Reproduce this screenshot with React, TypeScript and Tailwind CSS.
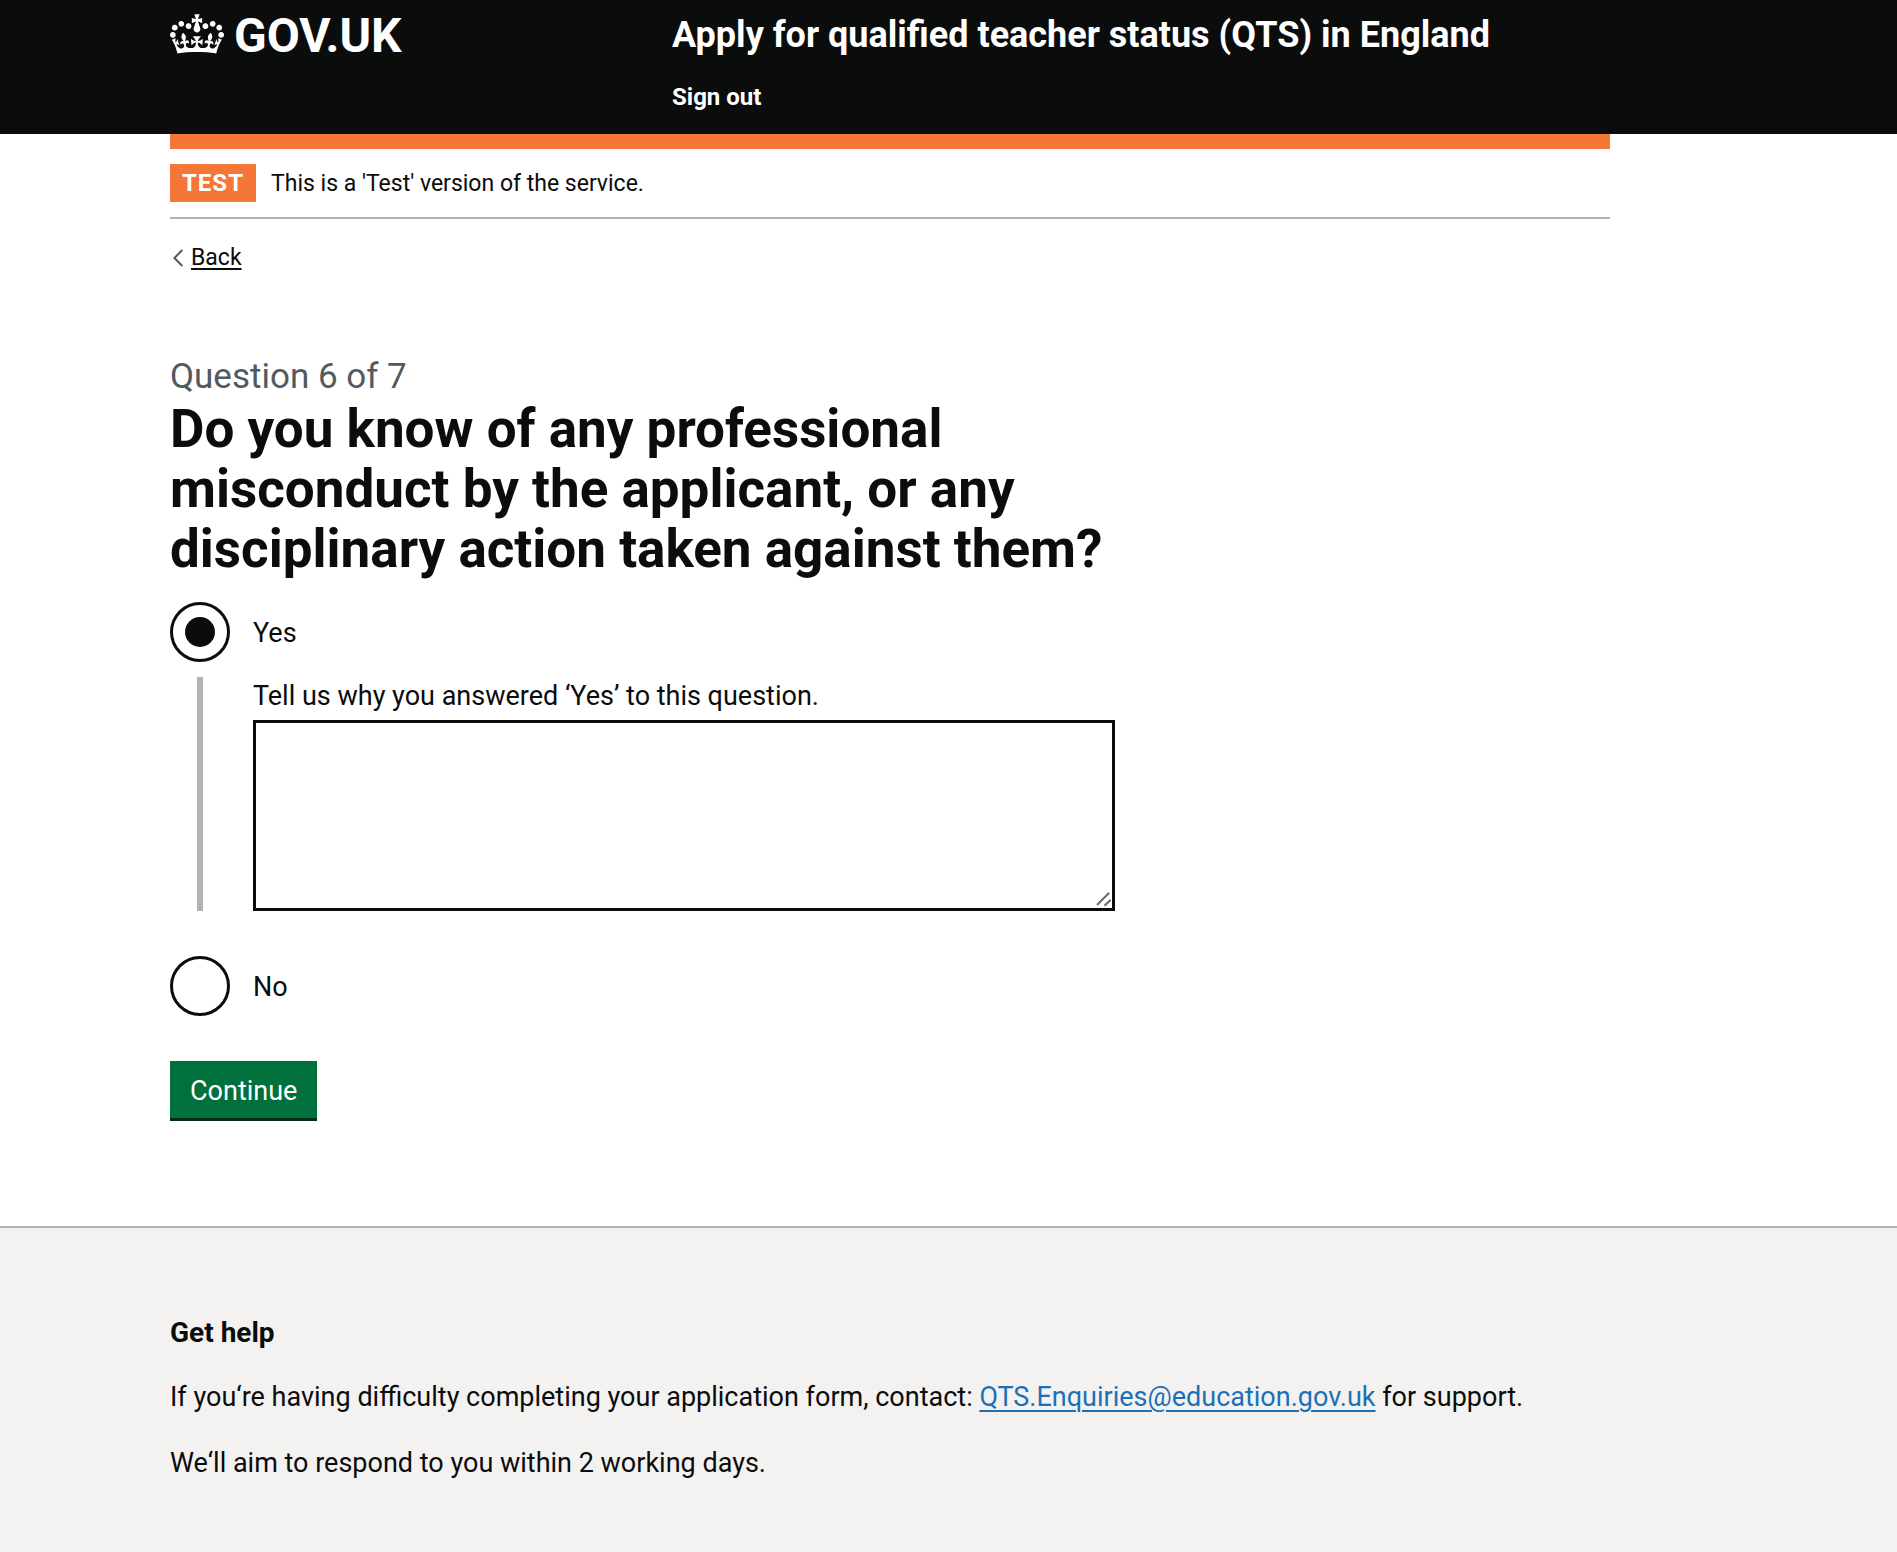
import React, { useState } from 'react';

const CROWN =
  'M25 30.2c3.5 1.5 7.7-.2 9.1-3.7 1.5-3.6-.2-7.8-3.9-9.2-3.6-1.4-7.6.3-9.1 3.9-1.4 3.5.3 7.5 3.9 9zM9 39.5c3.6 1.5 7.8-.2 9.2-3.7 1.5-3.6-.2-7.8-3.9-9.1-3.6-1.5-7.6.2-9.1 3.8-1.4 3.5.3 7.5 3.8 9zM4.4 57.2c3.5 1.5 7.7-.2 9.1-3.8 1.5-3.6-.2-7.7-3.9-9.1-3.5-1.5-7.6.3-9.1 3.8-1.4 3.5.3 7.6 3.9 9.1zm38.3-21.4c3.5 1.5 7.7-.2 9.1-3.8 1.5-3.6-.2-7.7-3.9-9.1-3.6-1.5-7.6.3-9.1 3.8-1.3 3.6.4 7.7 3.9 9.1zm64.4-5.6c-3.6 1.5-7.8-.2-9.1-3.7-1.5-3.6.2-7.8 3.8-9.2 3.6-1.4 7.7.3 9.2 3.9 1.3 3.5-.4 7.5-3.9 9zm15.9 9.3c-3.6 1.5-7.7-.2-9.1-3.7-1.5-3.6.2-7.8 3.7-9.1 3.6-1.5 7.7.2 9.2 3.8 1.5 3.5-.3 7.5-3.8 9zm4.7 17.7c-3.6 1.5-7.8-.2-9.2-3.8-1.5-3.6.2-7.7 3.9-9.1 3.6-1.5 7.7.3 9.2 3.8 1.3 3.5-.4 7.6-3.9 9.1zM89.3 35.8c-3.6 1.5-7.8-.2-9.2-3.8-1.4-3.6.2-7.7 3.9-9.1 3.6-1.5 7.7.3 9.2 3.8 1.4 3.6-.3 7.7-3.9 9.1zM69.7 17.7l8.9 4.7V9.3l-8.9 2.8c-.2-.3-.5-.6-.9-.9L72.4 0H59.6l3.5 11.2c-.3.3-.6.5-.9.9l-8.8-2.8v13.1l8.8-4.7c.3.3.6.7.9.9l-5 15.4v.1c-.2.8-.4 1.6-.4 2.4 0 4.1 3.1 7.5 7 8.1h.2c.3 0 .7.1 1 .1.4 0 .7 0 1-.1h.2c4-.6 7.1-4.1 7.1-8.1 0-.8-.1-1.7-.4-2.4V34l-5.1-15.4c.4-.2.7-.6 1-.9zM66 92.8c16.9 0 32.8 1.1 47.1 3.2 4-16.9 8.9-26.7 14-33.5l-9.6-3.4c1 4.9 1.1 7.2 0 10.2-1.5-1.4-3-4.3-4.2-8.7L108.6 76c2.8-2 5-3.2 7.5-3.3-4.4 9.4-10 11.9-13.6 11.2-4.3-.8-6.3-4.6-5.6-7.9 1-4.7 5.7-5.9 8-.5 4.3-8.7-3-11.4-7.6-8.8 7.1-7.2 7.9-13.5 2.1-21.1-8 6.1-8.1 12.3-4.5 20.8-4.7-5.4-12.1-2.5-9.5 6.2 3.4-5.2 7.9-2 7.2 3.1-.6 4.3-6.4 7.8-13.5 7.2-10.3-.9-10.9-8-11.2-13.8 2.5-.5 7.1 1.8 11 7.3L80.2 60c-4.1 4.4-8 5.3-12.3 5.4 1.4-4.4 8-11.6 8-11.6H55.5s6.4 7.2 7.9 11.6c-4.2-.1-8-1-12.3-5.4l1.4 16.4c3.9-5.5 8.5-7.7 10.9-7.3-.3 5.8-.9 12.8-11.1 13.8-7.2.6-12.9-2.9-13.5-7.2-.7-5 3.8-8.3 7.1-3.1 2.7-8.7-4.6-11.6-9.4-6.2 3.7-8.5 3.6-14.7-4.6-20.8-5.8 7.6-5 13.9 2.2 21.1-4.7-2.6-11.9.1-7.7 8.8 2.3-5.5 7.1-4.2 8.1.5.7 3.3-1.3 7.1-5.7 7.9-3.5.7-9-1.8-13.5-11.2 2.5.1 4.7 1.3 7.5 3.3l-4.7-15.4c-1.2 4.4-2.7 7.2-4.3 8.7-1.1-3-.9-5.3 0-10.2l-9.5 3.4c5 6.9 9.9 16.7 14 33.5 14.8-2.1 30.8-3.2 47.7-3.2z';

function Container({ children, className = '' }: { children: React.ReactNode; className?: string }) {
  return <div className={`max-w-[1780px] px-[170px] ${className}`}>{children}</div>;
}

function Header() {
  return (
    <header className="bg-[#0b0c0c] text-white">
      <Container className="flex items-start pb-[22px]">
        <a href="#" className="flex w-[502px] shrink-0 items-start gap-[10px] pt-3 text-[48px] leading-[48px] font-bold">
          <svg viewBox="0 0 132 97" className="mt-[2px] h-[40px] w-[54px]" fill="currentColor" aria-hidden="true">
            <path d={CROWN} />
          </svg>
          <span>GOV.UK</span>
        </a>
        <div className="flex flex-col items-start gap-[27px] pt-[15px] font-bold">
          <a href="#" className="text-[36px] leading-[40px]">
            Apply for qualified teacher status (QTS) in England
          </a>
          <nav>
            <a href="#" className="block text-[24px] leading-[30px]">
              Sign out
            </a>
          </nav>
        </div>
      </Container>
    </header>
  );
}

function PhaseBanner() {
  return (
    <div className="flex items-center gap-[15px] border-t-[15px] border-b-2 border-t-[#f47738] border-b-[#b1b4b6] py-[15px]">
      <strong className="bg-[#f47738] px-3 pt-px text-[24px] leading-[37px] font-bold tracking-[1px] text-white">
        TEST
      </strong>
      <span className="pt-[2px] text-[23px] leading-[36px]">This is a 'Test' version of the service.</span>
    </div>
  );
}

type RadioProps = { id: string; label: string; checked: boolean; onChange: () => void };

function Radio({ id, label, checked, onChange }: RadioProps) {
  return (
    <div className="flex items-center gap-[23px]">
      <input
        type="radio"
        id={id}
        name="misconduct"
        checked={checked}
        onChange={onChange}
        className="grid size-[60px] shrink-0 appearance-none place-items-center rounded-full border-[3px] border-[#0b0c0c] bg-white before:size-[30px] before:rounded-full before:content-[''] checked:before:bg-[#0b0c0c]"
      />
      <label htmlFor={id} className="pt-px text-[27px] leading-[38px]">
        {label}
      </label>
    </div>
  );
}

export default function App() {
  const [answer, setAnswer] = useState('yes');
  return (
    <div className="flex min-h-screen flex-col bg-white font-[Roboto,'Liberation_Sans',sans-serif] text-[#0b0c0c]">
      <Header />
      <Container>
        <PhaseBanner />
        <a href="#" className="mt-6 inline-flex items-center gap-2 pl-[3px] text-[23px] leading-[30px]">
          <svg viewBox="0 0 10 18" className="h-[18px] w-[10px]" fill="none" stroke="#505a5f" strokeWidth="2" aria-hidden="true">
            <path d="M9.300 1 1.400 9l7.900 8" />
          </svg>
          <span className="underline decoration-2 underline-offset-[3px]">Back</span>
        </a>
        <main className="max-w-[945px] pt-[83px] pb-[105px]">
          <form onSubmit={(e) => e.preventDefault()}>
            <span className="block pb-[2px] text-[35px] leading-[40px] text-[#505a5f]">Question 6 of 7</span>
            <fieldset>
              <legend>
                <h1 className="text-[53px] leading-[60px] font-bold">
                  Do you know of any professional misconduct by the applicant, or any disciplinary action taken against
                  them?
                </h1>
              </legend>
              <div className="pt-[23px]">
                <Radio id="yes" label="Yes" checked={answer === 'yes'} onChange={() => setAnswer('yes')} />
                {answer === 'yes' && (
                  <div className="mt-[15px] ml-[27px] border-l-[6px] border-[#b1b4b6] pl-[50px]">
                    <label htmlFor="details" className="block text-[27px] leading-[38px]">
                      Tell us why you answered ‘Yes’ to this question.
                    </label>
                    <div className="relative mt-[5px]">
                      <textarea
                        id="details"
                        className="block h-[191px] w-full resize-none border-[3px] border-[#0b0c0c] bg-white p-2 text-[27px] leading-[38px]"
                      />
                      <svg
                        viewBox="0 0 15 15"
                        className="pointer-events-none absolute right-1 bottom-1 size-[15px]"
                        stroke="#6b6b6b"
                        strokeWidth="2"
                        aria-hidden="true"
                      >
                        <path d="M1 13 13.200 .800M8.500 13.800 14.700 7.800" />
                      </svg>
                    </div>
                  </div>
                )}
                <div className="mt-[45px]">
                  <Radio id="no" label="No" checked={answer === 'no'} onChange={() => setAnswer('no')} />
                </div>
              </div>
            </fieldset>
            <button
              type="submit"
              className="mt-[45px] block h-[60px] bg-[#00703c] px-5 text-[27px] leading-[38px] text-white shadow-[inset_0_-3px_0_#002d18]"
            >
              Continue
            </button>
          </form>
        </main>
      </Container>
      <footer className="grow border-t-2 border-[#b1b4b6] bg-[#f3f2f1]">
        <Container className="pt-[86px] pb-16">
          <h2 className="mb-[26px] text-[28px] leading-[38px] font-bold">Get help</h2>
          <p className="mb-7 text-[27px] leading-[38px]">
            If you‘re having difficulty completing your application form, contact:{' '}
            <a
              href="mailto:QTS.Enquiries@education.gov.uk"
              className="text-[#1d70b8] underline decoration-2 underline-offset-4"
            >
              QTS.Enquiries@education.gov.uk
            </a>{' '}
            for support.
          </p>
          <p className="text-[27px] leading-[38px]">We‘ll aim to respond to you within 2 working days.</p>
        </Container>
      </footer>
    </div>
  );
}
